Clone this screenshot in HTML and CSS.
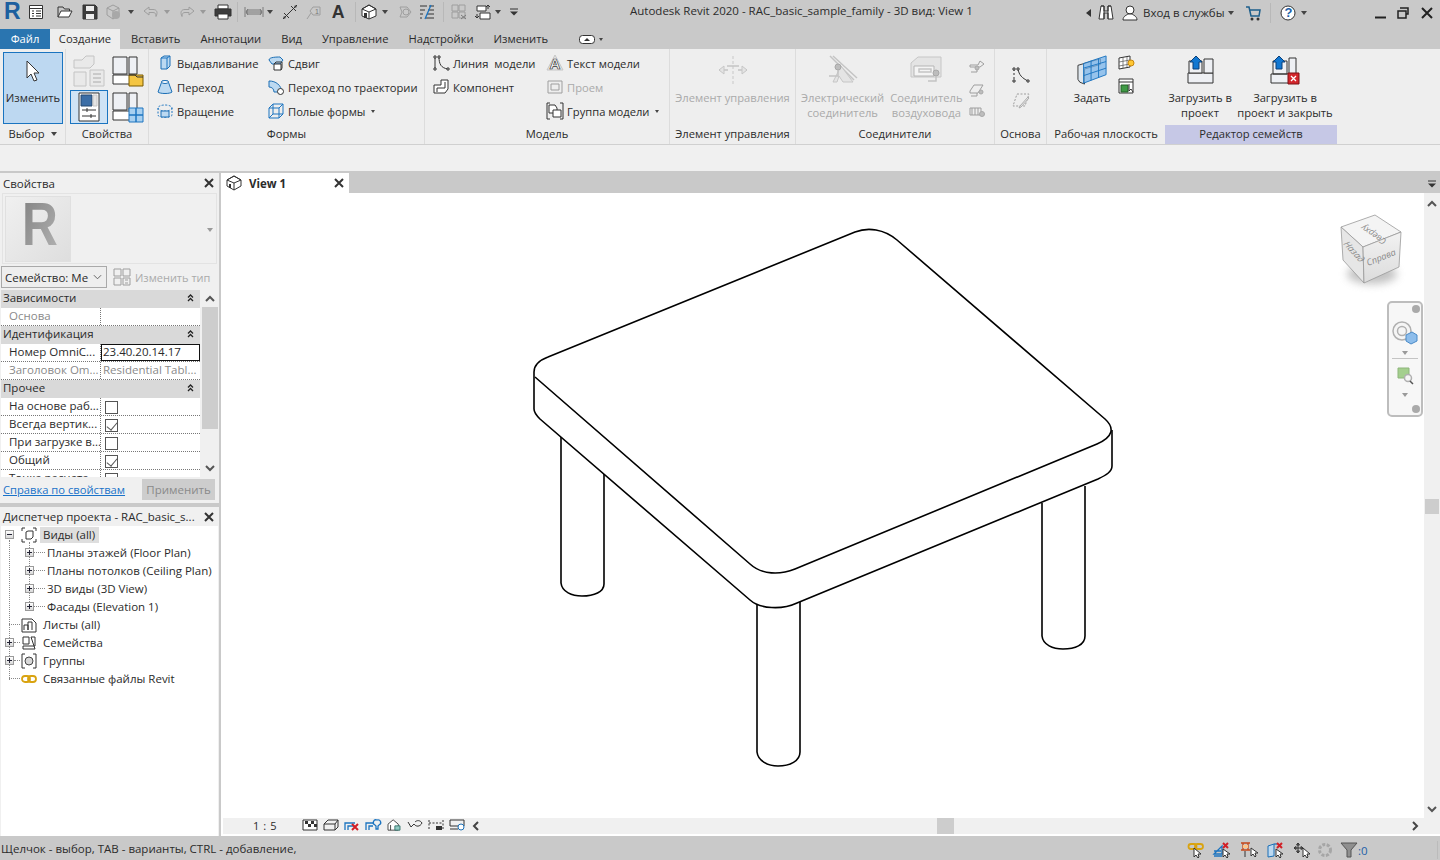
FILE: index.html
```html
<!DOCTYPE html>
<html lang="ru">
<head>
<meta charset="utf-8">
<title>Autodesk Revit 2020</title>
<link rel="stylesheet" href="styles.css">
</head>
<body>
<div class="app">

<header class="titlebar">
  <svg class="logo ml5" viewBox="0 0 16 20"><text x="-1" y="16.500" class="logo-r">R</text></svg>
  <svg class="i16 ml7" viewBox="0 0 16 16"><path d="M1.500 1.500h13v13h-13z" class="w"/><path d="M1.500 4.500h13" class="d"/><path d="M4 7h2M4 9.500h2M4 12h2M8 7h5M8 9.500h5M8 12h5" class="d"/></svg>
  <svg class="i16 ml13" viewBox="0 0 16 16"><path d="M1 13V3h5l1.500 2h5v2" class="d"/><path d="M1 13l3-6h11l-3 6z" class="w"/></svg>
  <svg class="i16 ml9" viewBox="0 0 16 16"><path d="M1 1h12l2 2v12H1z" class="dark"/><path d="M4 2h8v5H4zM4 10h8v5H4z" class="lite"/></svg>
  <svg class="i16 ml7" viewBox="0 0 16 16"><path d="M8 1l6 3v7l-6 4-6-4V4zM2 4l6 3 6-3M8 7v8" class="g"/><circle cx="11" cy="11" r="4" class="gf"/></svg>
  <i class="caret ml7"></i>
  <svg class="i16 ml9" viewBox="0 0 16 16"><path d="M6 3L1 7l5 4V8.500h4c2 0 3 1 3 4 2-4 1-7-3-7H6z" class="g"/></svg>
  <i class="caret ml5 dim"></i>
  <svg class="i16 ml9" viewBox="0 0 16 16"><path d="M10 3l5 4-5 4V8.500H6c-2 0-3 1-3 4-2-4-1-7 3-7h4z" class="g"/></svg>
  <i class="caret ml5 dim"></i>
  <svg class="i18 ml8" viewBox="0 0 18 16"><path d="M4 1h10v4H4z" class="w"/><path d="M1 5h16v7H1z" class="dark"/><path d="M4 10h10v5H4z" class="w"/></svg>
  <i class="vsep ml5"></i>
  <svg class="i20 ml6" viewBox="0 0 20 16"><path d="M1 3v10M19 3v10M2 8h16M4 5l-2 3 2 3M16 5l2 3-2 3M3 6h14v4H3z" class="g2"/></svg>
  <i class="caret ml3"></i>
  <svg class="i16 ml9" viewBox="0 0 16 16"><path d="M1 15L15 1M2 9l5 5M9 2l5 5" class="d"/><path d="M1 15l3-1-2-2zM15 1l-3 1 2 2z" class="df"/></svg>
  <svg class="i16 ml8" viewBox="0 0 16 16"><path d="M7 3h7v8H7l-3-4z" class="g"/><path d="M1 15l4-6" class="g"/><text x="9" y="10" class="tiny">1</text></svg>
  <svg class="i16 ml8" viewBox="0 0 16 18"><text x="1" y="16" class="big-a">A</text></svg>
  <i class="vsep ml9"></i>
  <svg class="i16 ml5" viewBox="0 0 16 16"><path d="M8 1l7 4v7l-7 3-7-3V5z" class="w"/><path d="M1 5l7-4 7 4-7 3zM8 8v7" class="d"/><path d="M3 9v5h3V9z" class="df"/></svg>
  <i class="caret ml5"></i>
  <svg class="i16 ml9" viewBox="0 0 16 16"><path d="M3 3h7l4 5-4 5H3l2-5z" class="g"/><circle cx="9" cy="8" r="3" class="g"/></svg>
  <svg class="i16 ml6" viewBox="0 0 16 16"><path d="M1 2h7M1 6h5M1 10h3M1 14h2M10 2h5M9 6h6M8 10h7M7 14h8" class="d"/><path d="M12 1L6 15" class="blue"/></svg>
  <i class="vsep ml8"></i>
  <svg class="i16 ml7" viewBox="0 0 16 16"><path d="M1 1h6v6H1zM8 8h6v6H8z" class="g"/><path d="M8 1h6v6H8zM1 8h6v6H1z" class="g"/><path d="M10 11l5 4M15 11l-5 4" class="g2"/></svg>
  <svg class="i16 ml8" viewBox="0 0 16 16"><path d="M2 2h9v5H2zM5 9h10v6H5z" class="w"/><path d="M13 1v4M11 3l2-2 2 2M2 10v4M0 12l2 2 2-2" class="d"/></svg>
  <i class="caret ml4"></i>
  <svg class="i8 ml9" viewBox="0 0 8 8"><path d="M0 1h8" class="d"/><path d="M0 3.500h8l-4 4z" class="df"/></svg>
  <div class="apptitle">Autodesk Revit 2020 - RAC_basic_sample_family - 3D вид: View 1</div>
  <div class="tb-right">
    <i class="caret-l"></i>
    <svg class="i16 ml7" viewBox="0 0 16 16"><path d="M3 1h3v5h4V1h3l2 13h-5V8H6v6H1z" class="w"/><path d="M3 1h3v13M10 14V1h3" class="d"/></svg>
    <svg class="i16 ml8" viewBox="0 0 16 16"><circle cx="8" cy="5" r="4" class="w"/><path d="M1 15c0-4 4-5 5-6h4c1 1 5 2 5 6z" class="w"/></svg>
    <span class="signin">Вход в службы</span>
    <i class="caret ml3"></i>
    <svg class="i16 ml11" viewBox="0 0 16 16"><path d="M1 2h3l2 9h8l1-6H5" class="blue-d"/><circle cx="7" cy="14" r="1.500" class="df"/><circle cx="13" cy="14" r="1.500" class="df"/></svg>
    <i class="vsep ml9"></i>
    <svg class="i16 ml9" viewBox="0 0 16 16"><circle cx="8" cy="8" r="7" class="w"/><text x="4.500" y="12" class="help">?</text></svg>
    <i class="caret ml5"></i>
    <svg class="win ml66" viewBox="0 0 12 12"><path d="M0 10.500h11" class="win-s"/></svg>
    <svg class="win ml10" viewBox="0 0 12 12"><path d="M3 1h8v6h-2M1 4h8v7H1z" class="win-t"/></svg>
    <svg class="win ml12" viewBox="0 0 12 12"><path d="M1 1l10 10M11 1L1 11" class="win-s"/></svg>
  </div>
</header>

<nav class="tabs">
  <div class="tab tab-file">Файл</div>
  <div class="tab tab-on">Создание</div>
  <div class="tab">Вставить</div>
  <div class="tab">Аннотации</div>
  <div class="tab">Вид</div>
  <div class="tab">Управление</div>
  <div class="tab">Надстройки</div>
  <div class="tab">Изменить</div>
  <svg class="tabmin" viewBox="0 0 16 9"><rect x="0.500" y="0.500" width="15" height="8" rx="3" class="w"/><path d="M5 6l3-3 3 3z" class="df"/></svg>
  <i class="caret-s"></i>
</nav>

<section class="ribbon">
  <div class="panel p-sel">
    <div class="pbody">
      <div class="modify">
        <svg class="cursor" viewBox="0 0 14 22"><path d="M1 1v17l4-4 3 7 3-1-3-7h5z" class="w"/></svg>
        <span>Изменить</span>
      </div>
    </div>
    <div class="ptitle">Выбор <i class="caret ml6"></i></div>
  </div>

  <div class="panel p-props">
    <div class="pbody props-grid">
      <svg class="i32" viewBox="0 0 32 32"><g class="lg"><path d="M1 5h8l4-4h8v8l-4 4H1z"/><path d="M1 17h12v14H1z"/><path d="M17 15h14v16H17z"/></g><path d="M20 19h8M20 23h8M20 27h8" class="lg2"/></svg>
      <svg class="i32" viewBox="0 0 32 32"><path d="M1 2h14v17H1zM17 2h8v17h-8z" class="grad"/><path d="M1 20h24v9H1z" class="w"/><path d="M17 20h14v11H17z" class="folder"/><path d="M17 20h6l2 2h6" class="d"/></svg>
      <div class="prop-on"><svg class="i24x30" viewBox="0 0 22 30"><path d="M1 1h20v28H1z" class="w"/><path d="M3 3h11v11H3z" class="bluebox"/><path d="M15 3h4v11h-4z" class="lgf"/><path d="M4 18h14M4 24h14" class="d"/><path d="M9 16v4M13 22v4" class="d"/></svg></div>
      <svg class="i32" viewBox="0 0 32 32"><path d="M1 2h14v17H1zM17 2h8v17h-8z" class="grad"/><path d="M1 20h24v9H1z" class="w"/><path d="M17 17h7v7h-7zM24 17h7v7h-7zM17 24h7v7h-7zM24 24h7v7h-7z" class="bluecell"/></svg>
    </div>
    <div class="ptitle">Свойства</div>
  </div>

  <div class="panel p-forms">
    <div class="pbody cols c-forms">
      <div class="col w-111">
        <div class="ri"><svg class="i16" viewBox="0 0 16 16"><path d="M4 3l3-2h6v10l-3 3H4z" class="blf"/><path d="M4 3h6v11M10 3l3-2" class="bl"/></svg><span>Выдавливание</span></div>
        <div class="ri"><svg class="i16" viewBox="0 0 16 16"><path d="M5 2h6l4 11c-2 2-12 2-14 0z" class="blf"/><ellipse cx="8" cy="3" rx="3.500" ry="1.500" class="w-bl"/></svg><span>Переход</span></div>
        <div class="ri"><svg class="i16" viewBox="0 0 16 16"><ellipse cx="8" cy="5" rx="7" ry="3" class="bl dash"/><path d="M1 5v7c0 3 14 3 14 0V5" class="bl dash"/><path d="M4 8h8v6H4z" class="blf"/></svg><span>Вращение</span></div>
      </div>
      <div class="col">
        <div class="ri"><svg class="i16" viewBox="0 0 16 16"><path d="M1 5c0-3 8-3 11-3l3 3-3 4H4z" class="blf"/><path d="M6 9h7v6H6z" class="w"/><path d="M6 9l2-2h6v6l-1 2" class="d"/></svg><span>Сдвиг</span></div>
        <div class="ri"><svg class="i16" viewBox="0 0 16 16"><path d="M1 2c7 0 12 4 13 11H6C6 10 4 8 1 8z" class="blf"/><circle cx="12.500" cy="12.500" r="3" class="w"/></svg><span>Переход по траектории</span></div>
        <div class="ri"><svg class="i16" viewBox="0 0 16 16"><path d="M1 5h10v10H1zM5 1h10v10H5zM1 5l4-4M11 5l4-4M1 15l4-4M11 15l4-4" class="bl"/></svg><span>Полые формы</span><i class="caret-s ml6"></i></div>
      </div>
    </div>
    <div class="ptitle">Формы</div>
  </div>

  <div class="panel p-model">
    <div class="pbody cols c-model">
      <div class="col w-113">
        <div class="ri"><svg class="i16" viewBox="0 0 16 16"><path d="M2 2v12M6 2c0 7 2 11 9 12" class="d"/><path d="M1 1h2v2H1zM5 1h2v2H5zM1 13h2v2H1zM14 13h2v2h-2z" class="w"/></svg><span class="wide">Линия модели</span></div>
        <div class="ri"><svg class="i16" viewBox="0 0 16 16"><path d="M1 6h7V1h7v9l-3 4H1z" class="w"/><path d="M4 13V9h8V3" class="d"/></svg><span>Компонент</span></div>
      </div>
      <div class="col">
        <div class="ri"><svg class="i18" viewBox="0 0 18 18"><path d="M9 1l8 15H1z" class="lgf"/><text x="3.500" y="15" class="a-out">A</text></svg><span class="tight">Текст модели</span></div>
        <div class="ri off"><svg class="i18" viewBox="0 0 18 18"><path d="M2 3h14v12H2zM5 6h8v6H5z" class="g"/></svg><span class="tight">Проем</span></div>
        <div class="ri"><svg class="i18" viewBox="0 0 18 18"><path d="M4 1H1v16h3M14 1h3v16h-3" class="d"/><path d="M3 3h6l2 3v5H3z" class="w"/><path d="M7 8h8v7H7z" class="w"/></svg><span class="tight">Группа модели</span><i class="caret-s ml6"></i></div>
      </div>
    </div>
    <div class="ptitle">Модель</div>
  </div>

  <div class="panel p-ctrl">
    <div class="pbody big-row">
      <div class="bigbtn off w-120">
        <div class="bigicon"><svg class="i32" viewBox="0 0 32 32"><path d="M16 2v28" class="lgd"/><path d="M2 16h9M21 16h9" class="lg3"/><path d="M2 16l5-4v8zM30 16l-5-4v8z" class="lgf"/><path d="M10 12h12" class="lg3"/></svg></div>
        <span>Элемент управления</span>
      </div>
    </div>
    <div class="ptitle">Элемент управления</div>
  </div>

  <div class="panel p-conn">
    <div class="pbody big-row r-conn">
      <div class="bigbtn off">
        <div class="bigicon"><svg class="i32" viewBox="0 0 32 32"><path d="M3 2l24 24M6 2l24 22" class="lg3"/><path d="M14 12l12 16H16l-4-6-2 6H6z" class="lgf"/><circle cx="11" cy="13" r="3" class="lgc"/><path d="M11 16v6H2" class="lg3"/></svg></div>
        <span>Электрический<br>соединитель</span>
      </div>
      <div class="bigbtn off">
        <div class="bigicon"><svg class="i32" viewBox="0 0 32 32"><path d="M1 9l7-6h23v20H1z" class="lgf"/><path d="M4 12h20v10H4z" class="lgw"/><path d="M9 15h12v3H9z" class="lg3"/><circle cx="26" cy="19" r="3" class="lgc"/><path d="M26 22v5H18" class="lg3"/></svg></div>
        <span>Соединитель<br>воздуховода</span>
      </div>
      <div class="col smalls off">
        <div class="sm"><svg class="i16" viewBox="0 0 16 16"><path d="M1 7h8l2-4 4 3-4 3H1zM8 10v4H2" class="g"/><circle cx="8" cy="10" r="2" class="lgc"/></svg></div>
        <div class="sm"><svg class="i16" viewBox="0 0 16 16"><path d="M1 9l4-6h9l-5 8H1zM8 11v3H2" class="g"/><circle cx="12" cy="10" r="2" class="lgc"/></svg></div>
        <div class="sm"><svg class="i16" viewBox="0 0 16 16"><path d="M1 3h11v7H1zM3 3v7M6 3v7M9 3v7" class="g"/><circle cx="13" cy="9" r="2.500" class="lgc"/></svg></div>
      </div>
    </div>
    <div class="ptitle">Соединители</div>
  </div>

  <div class="panel p-base">
    <div class="pbody base-col">
      <svg class="i18" viewBox="0 0 18 18"><path d="M2 3v12" class="dash-d"/><path d="M6 3c1 6 4 9 10 12" class="d"/><path d="M1 2h2v2H1zM5 2h2v2H5zM1 14h2v2H1zM15 14h2v2h-2z" class="w"/></svg>
      <svg class="i18" viewBox="0 0 18 18"><path d="M5 3h12L13 15H1z" class="g dash"/><path d="M8 15l8-9 1 1-8 9-2 1z" class="gf-l"/></svg>
    </div>
    <div class="ptitle">Основа</div>
  </div>

  <div class="panel p-plane">
    <div class="pbody plane-row">
      <div class="bigbtn w-60">
        <div class="bigicon"><svg class="i30" viewBox="0 0 32 32"><path d="M1 11l24-7v6L8 15v16l-5-2-2-3z" class="lgf-d"/><path d="M7 9l24-8v20L7 30z" class="plane"/><path d="M15 6v21M23 4v20M7 14l24-7M7 22l24-8" class="plane-l"/></svg></div>
        <span>Задать</span>
      </div>
      <div class="col">
        <div class="sm2"><svg class="i16" viewBox="0 0 16 16"><path d="M1 3l11-2v11L1 14z" class="w"/><path d="M5 2v11M9 2v10M1 7l11-2M1 11l11-2" class="d-thin"/><circle cx="13" cy="8" r="3" class="bulb"/></svg></div>
        <div class="sm2"><svg class="i16" viewBox="0 0 16 16"><path d="M1 1h14v14H1z" class="w"/><path d="M1 4h14" class="d"/><path d="M3 7h7v7H3z" class="greenbox"/><path d="M11 6v7l2-2 2 3" class="w"/></svg></div>
      </div>
    </div>
    <div class="ptitle">Рабочая плоскость</div>
  </div>

  <div class="panel p-fam">
    <div class="pbody fam-row">
      <div class="bigbtn w-70">
        <div class="bigicon"><svg class="i30" viewBox="0 0 30 30"><path d="M3 18h25v10H3z" class="grad"/><path d="M19 4h9v14h-9zM4 6h13v12H4z" class="grad"/><path d="M11 1l6 6h-3v7H8V7H5z" class="arrow"/></svg></div>
        <span>Загрузить в<br>проект</span>
      </div>
      <div class="bigbtn w-100">
        <div class="bigicon"><svg class="i30" viewBox="0 0 30 30"><path d="M1 19h18v9H1zM19 3h7v16h-7zM3 6h14v13H3z" class="grad"/><path d="M9 1l6 6h-3v7H6V7H3z" class="arrow"/><path d="M18 18h11v11H18z" class="redbox"/><path d="M21 21l5 5M26 21l-5 5" class="wl"/></svg></div>
        <span>Загрузить в<br>проект и закрыть</span>
      </div>
    </div>
    <div class="ptitle ptitle-fam">Редактор семейств</div>
  </div>
</section>
<div class="optbar"></div>

<main class="main">
  <aside class="side">
    <section class="props">
      <div class="phead"><span>Свойства</span><svg class="x" viewBox="0 0 10 10"><path d="M1 1l8 8M9 1l-8 8"/></svg></div>
      <div class="typebox">
        <div class="thumb"><svg class="thumb-r" viewBox="0 0 64 64"><defs><linearGradient id="rg" x1="0" y1="0" x2="1" y2="1"><stop offset="0" stop-color="#7f7f7f"/><stop offset="1" stop-color="#b4b4b4"/></linearGradient></defs><text class="r-big" transform="translate(16 48) scale(.8 1)" fill="url(#rg)">R</text></svg></div>
        <i class="caret dim type-caret"></i>
      </div>
      <div class="comborow">
        <div class="combo"><span>Семейство: Ме</span><svg class="chev" viewBox="0 0 10 6"><path d="M1 1l4 4 4-4"/></svg></div>
        <svg class="i18 ml6" viewBox="0 0 18 18"><path d="M1 1h7v7H1zM10 1h7v7h-7zM1 10h7v7H1z" class="g"/><path d="M10 10h7v7h-7zM12 12h3M12 15h3" class="g"/></svg>
        <span class="edit-type">Изменить тип</span>
      </div>
      <div class="propwrap">
        <div class="ptable">
          <div class="pgroup"><span>Зависимости</span><svg class="dbl" viewBox="0 0 7 8"><path d="M1 3.500l2.500-2.500 2.500 2.500M1 7l2.500-2.500L6 7"/></svg></div>
          <div class="prow"><div class="pk muted">Основа</div><div class="pv"></div></div>
          <div class="pgroup"><span>Идентификация</span><svg class="dbl" viewBox="0 0 7 8"><path d="M1 3.500l2.500-2.500 2.500 2.500M1 7l2.500-2.500L6 7"/></svg></div>
          <div class="prow"><div class="pk">Номер OmniC...</div><div class="pv pv-edit">23.40.20.14.17</div></div>
          <div class="prow"><div class="pk muted">Заголовок Om...</div><div class="pv muted">Residential Tabl...</div></div>
          <div class="pgroup"><span>Прочее</span><svg class="dbl" viewBox="0 0 7 8"><path d="M1 3.500l2.500-2.500 2.500 2.500M1 7l2.500-2.500L6 7"/></svg></div>
          <div class="prow"><div class="pk">На основе раб...</div><div class="pv"><i class="cb"></i></div></div>
          <div class="prow"><div class="pk">Всегда вертик...</div><div class="pv"><i class="cb cb-on"></i></div></div>
          <div class="prow"><div class="pk">При загрузке в...</div><div class="pv"><i class="cb"></i></div></div>
          <div class="prow"><div class="pk">Общий</div><div class="pv"><i class="cb cb-on"></i></div></div>
          <div class="prow"><div class="pk">Точка расчета</div><div class="pv"><i class="cb"></i></div></div>
        </div>
        <div class="pscroll">
          <svg class="sarrow" viewBox="0 0 10 6"><path d="M1 5l4-4 4 4"/></svg>
          <div class="pthumb"></div>
          <svg class="sarrow sarrow-b" viewBox="0 0 10 6"><path d="M1 1l4 4 4-4"/></svg>
        </div>
      </div>
      <div class="pfoot"><a class="help-link">Справка по свойствам</a><div class="apply">Применить</div></div>
    </section>

    <section class="browser">
      <div class="phead"><span>Диспетчер проекта - RAC_basic_s...</span><svg class="x" viewBox="0 0 10 10"><path d="M1 1l8 8M9 1l-8 8"/></svg></div>
      <div class="tree">
        <i class="vline v0"></i><i class="vline v1"></i>
        <div class="tr"><i class="exp minus"></i><svg class="i16 ml7" viewBox="0 0 16 16"><path d="M1 4V1h3M12 1h3v3M1 12v3h3M15 12v3h-3" class="d"/><path d="M5 5l2-1h5v6l-2 2H5z" class="w"/></svg><span class="lab sel">Виды (all)</span></div>
        <div class="tr l1"><i class="exp plus"></i><i class="dash-h"></i><span class="lab2">Планы этажей (Floor Plan)</span></div>
        <div class="tr l1"><i class="exp plus"></i><i class="dash-h"></i><span class="lab2">Планы потолков (Ceiling Plan)</span></div>
        <div class="tr l1"><i class="exp plus"></i><i class="dash-h"></i><span class="lab2">3D виды (3D View)</span></div>
        <div class="tr l1"><i class="exp plus"></i><i class="dash-h"></i><span class="lab2">Фасады (Elevation 1)</span></div>
        <div class="tr"><i class="dash-h h0"></i><svg class="i16" viewBox="0 0 16 16"><path d="M1 2h10l4 4v9H1z" class="w"/><path d="M3 13V8h4v5M7 13V5h4v8" class="d"/></svg><span class="lab lab-n">Листы (all)</span></div>
        <div class="tr"><i class="exp plus"></i><i class="dash-h h1"></i><svg class="i16" viewBox="0 0 16 16"><path d="M2 2h6v7H2zM10 2h4v9H2v3h12z" class="w"/></svg><span class="lab lab-n">Семейства</span></div>
        <div class="tr"><i class="exp plus"></i><i class="dash-h h1"></i><svg class="i16" viewBox="0 0 16 16"><path d="M4 1H1v14h3M12 1h3v14h-3" class="d"/><circle cx="8" cy="8" r="4" class="lgw-d"/></svg><span class="lab lab-n">Группы</span></div>
        <div class="tr"><i class="dash-h h0"></i><svg class="i16" viewBox="0 0 16 16"><rect x="1" y="5" width="8" height="6" rx="3" class="link"/><rect x="7" y="5" width="8" height="6" rx="3" class="link"/></svg><span class="lab lab-n">Связанные файлы Revit</span></div>
      </div>
    </section>
  </aside>

  <section class="viewer">
    <div class="doctabs">
      <div class="doctab">
        <svg class="i16" viewBox="0 0 16 16"><path d="M8 1l7 4v6l-7 4-7-4V5z" class="w"/><path d="M1 5l7-4 7 4-7 3zM8 8v7" class="d"/><path d="M3 9v4h2V9z" class="df"/></svg>
        <span>View 1</span>
        <svg class="x x-tab" viewBox="0 0 10 10"><path d="M1 1l8 8M9 1l-8 8"/></svg>
      </div>
      <svg class="doc-menu" viewBox="0 0 8 8"><path d="M0 1h8" class="d"/><path d="M0 3.500h8l-4 4z" class="df"/></svg>
    </div>
    <div class="canvas-row">
      <div class="canvas">
        <svg class="model" viewBox="221 193 1203 625">
          <g class="edge">
            <path d="M534 372C534 365 540 360 548 357L855 232C868 227 884 229 897 240L1105 419C1115 428 1113 437 1097 444L795 569C780 575 762 575 750 564L535 377"/>
            <path d="M534 372V409C534 413 537 416 540 419L750 600C760 609 782 610 797 603L1098 479C1106 475 1112 472 1112 466V430"/>
            <path d="M561 437V583C562 592 572 596 582 596C594 596 604 592 604 584V474"/>
            <path d="M757 604V752C758 761 768 766 778 766C790 766 800 761 800 752V602"/>
            <path d="M1042 503V636C1043 645 1053 649 1063 649C1075 649 1085 645 1085 636V486"/>
          </g>
        </svg>
        <svg class="cube" viewBox="0 0 80 90">
          <defs>
            <linearGradient id="cf" x1="0" y1="0" x2="0" y2="1"><stop offset="0" stop-color="#f2f2f2"/><stop offset="1" stop-color="#dcdcdc"/></linearGradient>
            <filter id="blur" x="-30%" y="-60%" width="160%" height="220%"><feGaussianBlur stdDeviation="4"/></filter>
          </defs>
          <ellipse cx="36" cy="63" rx="25" ry="10" class="cube-sh" filter="url(#blur)"/>
          <path d="M5 16L39 4 65 21 27 36z" class="cube-top"/>
          <path d="M5 16L27 36 28 72 7 49z" class="cube-left"/>
          <path d="M27 36L65 21 63 56 28 72z" fill="url(#cf)" class="cube-line"/>
          <text class="cube-t" transform="translate(51 29) rotate(214)">Сверху</text>
          <text class="cube-t" transform="translate(7 33) rotate(48) skewX(-8)">Назад</text>
          <text class="cube-t" transform="translate(32 55) rotate(-22)">Справа</text>
        </svg>
        <div class="navbar">
          <i class="nb-dot nb-x"></i>
          <svg class="nb-wheel" viewBox="0 0 26 24"><circle cx="10" cy="10" r="9" class="nw"/><circle cx="10" cy="10" r="4.500" class="nw"/><path d="M14 14l6-3 5 3v6l-6 3-5-3z" class="cubeblue"/></svg>
          <i class="caret dim nb-c"></i>
          <hr class="nb-hr">
          <svg class="nb-zoom" viewBox="0 0 18 18"><path d="M1 1h11v10H1z" class="greensq"/><circle cx="11" cy="11" r="3.500" class="nw"/><path d="M13 14l3 3" class="nw-d"/></svg>
          <i class="caret dim nb-c nb-c2"></i>
          <i class="nb-dot nb-m"></i>
        </div>
      </div>
      <div class="vscroll">
        <svg class="sarrow sa-up" viewBox="0 0 10 6"><path d="M1 5l4-4 4 4"/></svg>
        <div class="vthumb"></div>
        <svg class="sarrow sa-down" viewBox="0 0 10 6"><path d="M1 1l4 4 4-4"/></svg>
      </div>
    </div>
    <div class="hbar">
      <span class="scale">1 : 5</span>
      <svg class="v16 vb0" viewBox="0 0 16 12"><path d="M1 1h14v10H1z" class="w"/><path d="M3 2h3v3H3zM9 2h3v3H9zM6 5h3v3H6zM12 5h3v3h-3z" class="df"/></svg>
      <svg class="v16 vb1" viewBox="0 0 16 12"><path d="M1 5l4-4h10v7l-3 3H1zM1 5h11v6M12 5l3-4" class="d"/></svg>
      <svg class="v16 vb1" viewBox="0 0 16 12"><path d="M1 11V4h10M4 11V7h6" class="blue"/><path d="M8 5l6 6M14 5l-6 6" class="red"/></svg>
      <svg class="v16 vb1" viewBox="0 0 16 12"><path d="M1 11V4h8M4 11V7h4" class="blue"/><path d="M12 1a2.500 2.500 0 0 1 2 5l-1 1v3h-2V7l-1-1a2.500 2.500 0 0 1 2-5z" class="blue"/></svg>
      <svg class="v16 vb1" viewBox="0 0 16 14"><path d="M1 6l6-5 6 5v7H1z" class="w"/><path d="M4 7v6" class="d"/><path d="M9 8h6v5H9z" class="tealf"/></svg>
      <svg class="v16 vb1" viewBox="0 0 16 12"><path d="M1 3l3 5 3-3c2 3 6 3 8-1-2-3-5-3-7-1" class="d"/></svg>
      <svg class="v16 vb1" viewBox="0 0 16 12"><path d="M1 1v10M15 1v10M1 4h14" class="d dash"/><path d="M8 7h6v4H8z" class="df"/></svg>
      <svg class="v16 vb1" viewBox="0 0 16 12"><path d="M1 1h14v6H1zM1 10h8" class="d"/><circle cx="12" cy="8" r="3" class="w-bl"/></svg>
      <svg class="hchev hc-l" viewBox="0 0 6 10"><path d="M5 1L1 5l4 4"/></svg>
      <div class="hthumb"></div>
      <svg class="hchev hc-r" viewBox="0 0 6 10"><path d="M1 1l4 4-4 4"/></svg>
    </div>
  </section>
</main>

<footer class="status">
  <span>Щелчок - выбор, TAB - варианты, CTRL - добавление,</span>
  <div class="st-icons">
    <svg class="i16" viewBox="0 0 16 16"><rect x="0.500" y="2" width="8" height="5" rx="2.500" class="link"/><rect x="7" y="2" width="8" height="5" rx="2.500" class="link"/><path d="M6 6v9l2-2 2 3 1-1-1-3h3z" class="w"/></svg>
    <svg class="i18" viewBox="0 0 18 16"><path d="M1 12L9 4v8zM1 9h7M1 14h8" class="blue"/><path d="M10 1l5 5M15 1l-5 5" class="red"/><path d="M10 7v8l2-2 2 3 1-1-1-3h3z" class="w"/></svg>
    <svg class="i18 st-pin" viewBox="0 0 18 16"><path d="M1 1h9M3 1v7M8 1v7M1 8h9" class="orange"/><path d="M3 3h5v3H3z" class="orangef"/><path d="M5 9v6" class="d"/><path d="M11 6v8l2-2 2 3 1-1-1-3h3z" class="w"/></svg>
    <svg class="i18 st-sheet" viewBox="0 0 18 16"><path d="M1 4l6-2v12l-6 1z" class="blf"/><path d="M7 2h3" class="blue"/><path d="M10 1l5 5M15 1l-5 5" class="red"/><path d="M9 7v8l2-2 2 3 1-1-1-3h3z" class="w"/></svg>
    <svg class="i18 st-move" viewBox="0 0 18 16"><path d="M5 1v10M1 6h9M5 1L3.500 3h3zM5 11l-1.500-2h3zM1 6l2-1.500v3zM10 6L8 4.500v3z" class="d"/><path d="M10 6v9l2-2 2 3 1-1-1-3h3z" class="w"/></svg>
    <svg class="i16 st-gear" viewBox="0 0 16 16"><circle cx="8" cy="8" r="5.500" class="gear"/></svg>
    <svg class="i16 st-filter" viewBox="0 0 16 16"><path d="M0 1h16l-6 7v7H6V8z" class="filter"/></svg>
    <span class="zero">:0</span>
    <i class="grip-s"></i>
  </div>
</footer>

</div>
</body>
</html>
```

FILE: styles.css
```css
* { box-sizing: border-box; }
html, body { margin: 0; height: 100%; overflow: hidden; }
body { font: 11.5px/15px "Open Sans", "Noto Sans", sans-serif; color: #2b2b2b; background: #c9c9c9; }
i { display: block; font-style: normal; flex: none; }
svg { display: block; flex: none; overflow: visible; }

.app { width: 1440px; height: 860px; display: flex; flex-direction: column; }

/* spacing helpers */
.ml3 { margin-left: 3px; } .ml4 { margin-left: 4px; } .ml5 { margin-left: 5px; } .ml6 { margin-left: 6px; }
.ml7 { margin-left: 7px; } .ml8 { margin-left: 8px; } .ml9 { margin-left: 9px; } .ml10 { margin-left: 10px; } .ml11 { margin-left: 11px; }
.ml12 { margin-left: 12px; } .ml13 { margin-left: 13px; } .ml66 { margin-left: 68px; }

/* icon sizes */
.i8 { width: 8px; height: 8px; } .i16 { width: 16px; height: 16px; } .i18 { width: 18px; height: 18px; }
.i20 { width: 20px; height: 16px; } .i30 { width: 30px; height: 30px; } .i32 { width: 32px; height: 32px; }
.i24x30 { width: 22px; height: 30px; }
.logo { width: 16px; height: 20px; }

/* shared strokes */
.w { fill: #fff; stroke: #333; stroke-width: 1; }
.d { fill: none; stroke: #333; stroke-width: 1; }
.d-thin { fill: none; stroke: #555; stroke-width: .7; }
.df { fill: #333; stroke: none; }
.dark { fill: #3d3d3d; stroke: #333; }
.lite { fill: #eee; stroke: none; }
.g { fill: none; stroke: #9e9e9e; stroke-width: 1; }
.g2 { fill: none; stroke: #7a7a7a; stroke-width: 1; }
.gf { fill: #a8a8a8; stroke: none; }
.gf-l { fill: #eee; stroke: #aaa; }
.dash { stroke-dasharray: 2 1.500; }
.dash-d { fill: none; stroke: #333; stroke-dasharray: 2 2; }
.blue { fill: none; stroke: #1c74c0; stroke-width: 1.300; }
.blue-d { fill: none; stroke: #1d5f8c; stroke-width: 1.500; }
.red { fill: none; stroke: #d21f26; stroke-width: 2; }
.bl { fill: none; stroke: #1c74c0; stroke-width: 1; }
.blf { fill: #bcd9f1; stroke: #1c6fb5; stroke-width: 1; }
.w-bl { fill: #fff; stroke: #1c6fb5; stroke-width: 1; }
.lg path { fill: #e9e9e9; stroke: #c4c4c4; }
.lg2 { fill: none; stroke: #aaa; }
.lgf { fill: #e4e4e4; stroke: #c6c6c6; }
.lgf-d { fill: #dfe7ee; stroke: #333; }
.lg3 { fill: none; stroke: #c4c4c4; stroke-width: 1.500; }
.lgd { fill: none; stroke: #c8c8c8; stroke-dasharray: 3 2; }
.lgc { fill: #bdbdbd; stroke: #a8a8a8; }
.lgw { fill: #f4f4f4; stroke: #b5b5b5; }
.lgw-d { fill: #d8d8d8; stroke: #444; }
.grad { fill: #eef0f4; stroke: #333; }
.folder { fill: #f4c542; stroke: #7a5a00; }
.bluebox { fill: #3c6ea6; stroke: #27496f; }
.bluecell { fill: #a8d0f0; stroke: #1c74c0; }
.plane { fill: rgba(120,180,235,.75); stroke: #1c74c0; }
.plane-l { fill: none; stroke: #1c74c0; }
.bulb { fill: #ffc733; stroke: #c7860d; }
.greenbox { fill: #3f9a45; stroke: #245f28; }
.arrow { fill: #1177d1; stroke: #0a3f78; }
.redbox { fill: #d3262c; stroke: #7e1014; }
.wl { fill: none; stroke: #fff; stroke-width: 1.300; }
.link { fill: none; stroke: #d9a310; stroke-width: 1.800; }
.tealf { fill: #8fc9c1; stroke: #2e6e66; }
.orange { fill: none; stroke: #c4471b; stroke-width: 1.300; }
.orangef { fill: #ffc68a; stroke: none; }
.gear { fill: none; stroke: #a6a6a6; stroke-width: 3; stroke-dasharray: 3 1.500; }
.filter { fill: #8f8f8f; stroke: #555; }
.logo-r { font: 700 23px "Liberation Sans", sans-serif; fill: #1d5f9f; }
.tiny { font: 7px "Liberation Sans", sans-serif; fill: #777; }
.big-a { font: 700 20px "Liberation Sans", sans-serif; fill: #333; }
.help { font: 700 13px "Liberation Sans", sans-serif; fill: #1c5fa8; }
.a-out { font: 700 15px "Liberation Sans", sans-serif; fill: #fff; stroke: #333; stroke-width: .7; }

/* title bar */
.titlebar { height: 29px; display: flex; align-items: center; background: #c9c9c9; flex: none; padding-bottom: 5px; }
.caret { width: 0; height: 0; border: 3px solid transparent; border-top: 4px solid #444; border-bottom: 0; }
.caret.dim { border-top-color: #9a9a9a; }
.caret-s { width: 0; height: 0; border: 2.500px solid transparent; border-top: 3px solid #444; border-bottom: 0; }
.caret-l { width: 0; height: 0; border: 4px solid transparent; border-right: 5px solid #333; border-left: 0; }
.vsep { width: 1px; height: 20px; background: #b8b8b8; }
.apptitle { margin-left: 112px; white-space: nowrap; margin-top: -4px; }
.tb-right { position: absolute; left: 1086px; top: 0; height: 25px; display: flex; align-items: center; }
.signin { margin-left: 5px; white-space: nowrap; }
.win { width: 12px; height: 12px; }
.win-s { fill: none; stroke: #222; stroke-width: 2; }
.win-t { fill: none; stroke: #222; stroke-width: 1.500; }

/* tabs */
.tabs { height: 20px; display: flex; align-items: center; background: #c9c9c9; flex: none; font-size: 11.2px; }
.tab { height: 20px; line-height: 20px; padding: 0 10px; white-space: nowrap; }
.tab-file { width: 50px; padding: 0; text-align: center; background: #2a75b0; color: #fff; }
.tab-on { width: 70px; padding: 0; text-align: center; background: #eee; margin-right: 1px; }
.tabmin { width: 16px; height: 9px; margin-left: 21px; margin-right: 4px; }

/* ribbon */
.ribbon { height: 95px; display: flex; background: #eee; flex: none; font-size: 11.2px; }
.panel { display: flex; flex-direction: column; border-right: 1px solid #dcdcdc; flex: none; }
.pbody { height: 76px; }
.ptitle { height: 19px; padding-bottom: 2px; text-align: center; white-space: nowrap; display: flex; align-items: center; justify-content: center; }
.ptitle-fam { background: #c6c8e6; }
.p-sel { width: 66px; } .p-props { width: 83px; } .p-forms { width: 276px; } .p-model { width: 245px; }
.p-ctrl { width: 126px; } .p-conn { width: 199px; } .p-base { width: 52px; } .p-plane { width: 118px; border-right: 0; }
.p-fam { width: 172px; border-right: 0; }
.modify { margin: 3px 0 0 3px; width: 60px; height: 72px; background: #bdd8f1; border: 1px solid #1a74c0; display: flex; flex-direction: column; align-items: center; white-space: nowrap; }
.cursor { width: 14px; height: 22px; margin-top: 7px; }
.modify span { margin-top: 8px; }
.props-grid { display: grid; grid-template-columns: 39px 32px; grid-template-rows: 36px 36px; column-gap: 4px; padding: 4px 0 0 3px; align-items: center; justify-items: center; }
.prop-on { width: 38px; height: 34px; border: 1px solid #1a74c0; background: #cfe3f5; display: flex; align-items: center; justify-content: center; }
.cols { display: flex; padding: 2px 0 0 8px; }
.col { display: flex; flex-direction: column; }
.w-111 { width: 111px; } .w-113 { width: 113px; } .w-120 { width: 120px; } .w-60 { width: 60px; } .w-70 { width: 70px; } .w-100 { width: 100px; }
.ri { height: 24px; display: flex; align-items: center; white-space: nowrap; }
.ri span { margin-left: 4px; }
.ri .tight { margin-left: 3px; }
.wide { word-spacing: 3px; }
.off { color: #aaa; }
.big-row { display: flex; justify-content: center; }
.bigbtn { display: flex; flex-direction: column; align-items: center; text-align: center; white-space: nowrap; }
.bigicon { height: 41px; display: flex; align-items: center; justify-content: center; }
.r-conn { justify-content: flex-start; padding-left: 5px; column-gap: 6px; }
.smalls { padding-top: 5px; margin-left: 0; }
.sm { height: 24.500px; display: flex; align-items: center; }
.base-col { display: flex; flex-direction: column; align-items: center; row-gap: 7px; padding-top: 17px; }
.plane-row { display: flex; padding-left: 15px; }
.plane-row .col { padding-top: 6px; row-gap: 7px; }
.plane-row .bigbtn { width: 60px; margin-right: -4px; }
.fam-row { display: flex; }
.optbar { height: 27px; background: #f0f0f0; border-top: 1px solid #d0d0d0; flex: none; }

/* main area */
.main { height: 665px; display: flex; column-gap: 2px; flex: none; }
.side { width: 219px; padding-top: 2px; display: flex; flex-direction: column; row-gap: 4px; }
.props { height: 330px; background: #f0f0f0; display: flex; flex-direction: column; }
.browser { flex: 1; background: #f0f0f0; display: flex; flex-direction: column; }
.phead { height: 20px; display: flex; align-items: center; justify-content: space-between; padding: 0 5px 0 3px; flex: none; white-space: nowrap; }
.browser .phead { height: 19px; }
.x { width: 10px; height: 10px; fill: none; stroke: #333; stroke-width: 2; }
.typebox { height: 71px; margin: 0 2px; border: 1px solid #e3e3e3; position: relative; flex: none; padding: 2px; }
.thumb { width: 66px; height: 66px; background: linear-gradient(135deg, #f0f0f0, #dedede); border: 1px solid #e0e0e0; }
.thumb-r { width: 64px; height: 64px; }
.r-big { font: 700 62px "Liberation Sans", sans-serif; }
.type-caret { position: absolute; left: 204px; top: 34px; }
.comborow { height: 22px; margin: 2px 0 0 1px; display: flex; align-items: center; flex: none; }
.combo { width: 106px; height: 22px; border: 1px solid #a9a9a9; background: #eee; display: flex; align-items: center; padding-left: 3px; white-space: nowrap; overflow: hidden; justify-content: space-between; padding-right: 4px; }
.chev { width: 9px; height: 6px; fill: none; stroke: #555; }
.edit-type { margin-left: 4px; color: #aaa; white-space: nowrap; font-size: 11px; }
.propwrap { height: 187px; margin: 2px 0 0 1px; display: flex; flex: none; }
.ptable { width: 199px; height: 187px; overflow: hidden; background: #fff; }
.pgroup { height: 18px; line-height: 16px; background: #d9d9d9; display: flex; align-items: flex-start; justify-content: space-between; padding: 0 6px 0 2px; }
.dbl { width: 7px; height: 8px; margin-top: 4px; fill: none; stroke: #222; stroke-width: 1.300; }
.prow { height: 18px; display: flex; border-bottom: 1px dotted #777; }
.pk { width: 100px; padding-left: 8px; border-right: 1px dotted #777; white-space: nowrap; overflow: hidden; line-height: 16px; }
.pv { flex: 1; padding-left: 2px; white-space: nowrap; overflow: hidden; line-height: 16px; }
.pv-edit { border: 1px solid #111; padding-left: 1px; line-height: 14px; }
.muted { color: #8a8a8a; }
.cb { width: 13px; height: 13px; border: 1px solid #555; background: #fff; margin: 3px 0 0 2px; position: relative; }
.cb-on::after { content: ""; position: absolute; left: 3px; top: 0; width: 5px; height: 9px; border: solid #555; border-width: 0 1px 1px 0; transform: rotate(40deg); }
.pscroll { width: 17px; margin-left: 1px; display: flex; flex-direction: column; align-items: center; background: #f0f0f0; }
.sarrow { width: 10px; height: 6px; fill: none; stroke: #555; stroke-width: 2; margin-top: 6px; }
.pthumb { width: 16px; height: 122px; background: #cdcdcd; margin-top: 5px; }
.sarrow-b { margin-top: auto; margin-bottom: 6px; }
.pfoot { height: 25px; display: flex; align-items: center; justify-content: space-between; padding: 0 4px 2px 3px; flex: none; margin-top: 1px; }
.help-link { color: #1a73c9; text-decoration: underline; white-space: nowrap; font-size: 11.2px; }
.apply { width: 73px; height: 21px; background: #cdcdcd; color: #8a8a8a; text-align: center; line-height: 21px; }

/* browser tree */
.tree { flex: 1; background: #fff; margin: 0 1px; position: relative; }
.tr { height: 18px; line-height: 16px; padding-bottom: 1px; display: flex; align-items: center; white-space: nowrap; position: relative; }
.l1 { padding-left: 20px; }
.exp { width: 9px; height: 9px; margin-left: 4px; border: 1px solid #9a9a9a; background: linear-gradient(#fff, #d8d8d8); position: relative; }
.exp::before { content: ""; position: absolute; left: 1px; top: 3px; width: 5px; height: 1px; background: #223; }
.plus::after { content: ""; position: absolute; left: 3px; top: 1px; width: 1px; height: 5px; background: #223; }
.lab { margin-left: 4px; }
.lab.sel { background: #dedede; height: 16px; width: 59px; margin-left: 3px; padding-left: 3px; }
.lab-n { margin-left: 6px; }
.lab2 { margin-left: 2px; }
.dash-h { width: 11px; height: 0; border-top: 1px dotted #888; }
.dash-h.h0 { margin-left: 8px; margin-right: 1px; }
.dash-h.h1 { width: 6px; margin-right: 1px; }
.vline { position: absolute; width: 0; border-left: 1px dotted #888; }
.v0 { left: 8px; top: 14px; height: 140px; }
.v1 { left: 28px; top: 16px; height: 66px; }

/* viewer */
.viewer { flex: 1; display: flex; flex-direction: column; min-width: 0; background: #fff; }
.doctabs { height: 22px; background: #c9c9c9; display: flex; justify-content: space-between; flex: none; }
.doctab { width: 128px; margin-top: 2px; height: 20px; background: #fff; display: flex; align-items: center; padding: 0 5px; font-weight: 700; }
.doctab span { margin-left: 7px; flex: 1; }
.doc-menu { width: 8px; height: 8px; margin: 9px 4px 0 0; }
.canvas-row { height: 625px; display: flex; flex: none; }
.canvas { flex: 1; position: relative; min-width: 0; background: #fff; }
.model { position: absolute; left: 0; top: 0; width: 1203px; height: 625px; }
.edge path { fill: none; stroke: #000; stroke-width: 1.600; }
.cube { position: absolute; left: 1115px; top: 18px; width: 80px; height: 90px; }
.cube-sh { fill: #999; opacity: .6; }
.cube-top { fill: #f4f4f4; stroke: #999; stroke-width: .8; }
.cube-left { fill: #e6e6e6; stroke: #999; stroke-width: .8; }
.cube-line { stroke: #999; stroke-width: .8; }
.cube-t { font: italic 9px "Open Sans", sans-serif; fill: #8a8a8a; }
.navbar { position: absolute; left: 1166px; top: 108px; width: 36px; height: 116px; border: 2px solid #bdbdbd; border-radius: 5px; background: #f7f7f7; }
.nb-dot { position: absolute; width: 8px; height: 8px; border-radius: 50%; background: #aaa; left: 23px; }
.nb-x { top: 2px; }
.nb-m { bottom: 2px; }
.nb-wheel { position: absolute; left: 3px; top: 18px; width: 26px; height: 24px; }
.nw { fill: #f5f5f5; stroke: #b0b0b0; stroke-width: 1.500; }
.nw-d { fill: none; stroke: #555; stroke-width: 1.500; }
.cubeblue { fill: #8dbdeb; stroke: #4a8ac7; }
.nb-c { position: absolute; left: 13px; top: 48px; }
.nb-c2 { top: 90px; }
.nb-hr { position: absolute; left: 3px; top: 55px; width: 26px; margin: 0; border: 0; border-top: 1px solid #c4c4c4; }
.nb-zoom { position: absolute; left: 8px; top: 64px; width: 18px; height: 18px; }
.greensq { fill: #a4cf8e; stroke: #8db57a; }
.vscroll { width: 16px; background: #f0f0f0; display: flex; flex-direction: column; align-items: center; flex: none; }
.sa-up { margin-top: 8px; flex: none; }
.vthumb { width: 14px; height: 15px; background: #cdcdcd; margin-top: 292px; }
.sa-down { margin-top: 292px; }
.hbar { height: 16px; margin: 0 0 1px 2px; background: #f0f0f0; display: flex; align-items: center; flex: none; position: relative; }
.scale { margin-left: 30px; width: 49px; letter-spacing: .6px; font-size: 11px; margin-bottom: 2px; }
.v16 { width: 16px; height: 12px; margin-bottom: 2px; }
.vb1 { margin-left: 5px; }
.hchev { width: 6px; height: 10px; fill: none; stroke: #444; stroke-width: 2; margin-bottom: 1px; }
.hc-l { margin-left: 8px; }
.hthumb { width: 17px; height: 16px; background: #cdcdcd; margin-left: 458px; }
.hc-r { margin-left: 458px; }

/* status */
.status { height: 24px; flex: 1; display: flex; align-items: center; padding-left: 1px; background: #c9c9c9; white-space: nowrap; position: relative; }
.st-icons { position: absolute; left: 1188px; top: 5px; display: flex; align-items: center; column-gap: 9px; }
.st-move { margin-left: -1px; }
.st-gear { margin-left: -3px; }
.st-filter { margin-left: -1px; }
.zero { margin-left: -8px; color: #1c5fa8; }
.grip-s { width: 1px; height: 18px; background: #bbb; margin-left: 60px; }
```
